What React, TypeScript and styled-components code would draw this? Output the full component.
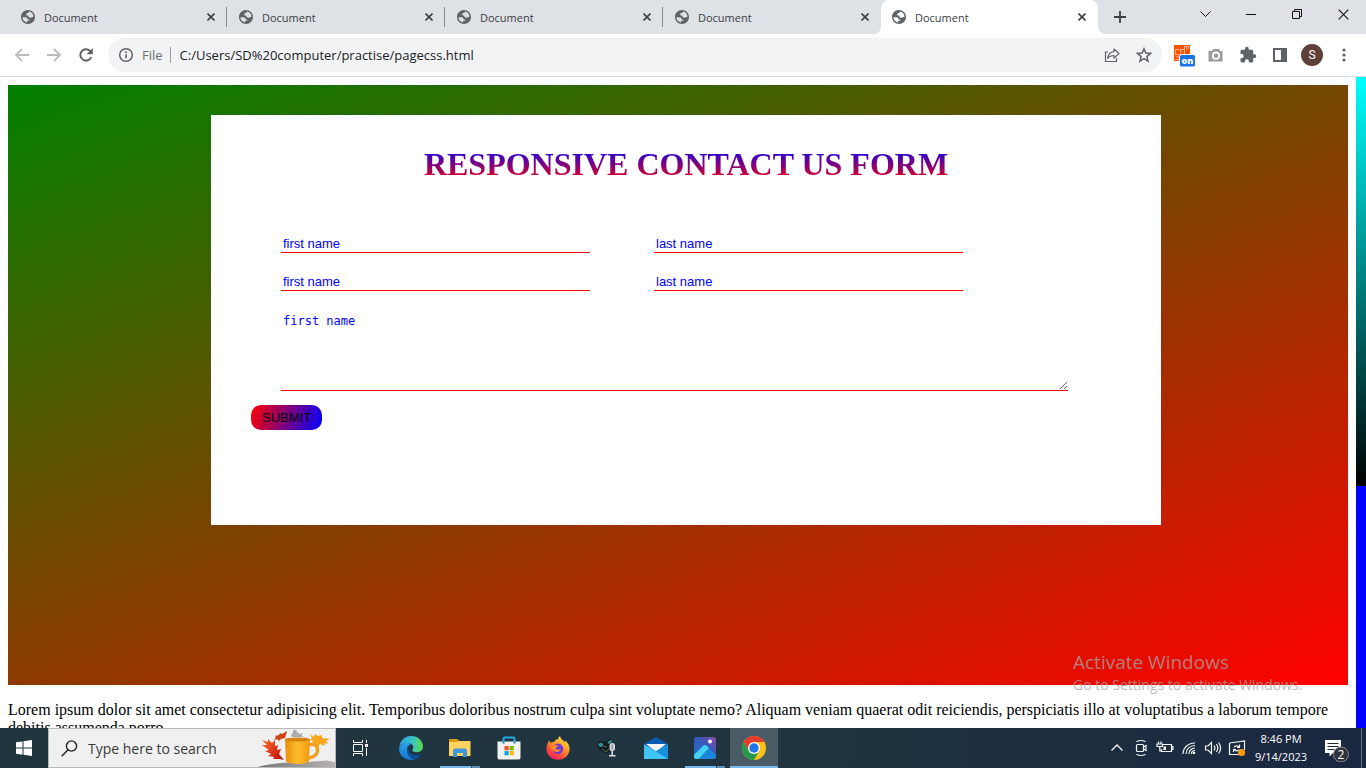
import React from "react";
import styled, { createGlobalStyle, css } from "styled-components";

const UI_FONT = `"Open Sans", "Noto Sans", sans-serif`;

const GlobalStyle = createGlobalStyle`
  * { box-sizing: border-box; }
  body { margin: 0; background: #fff; }
  button { font: inherit; color: inherit; border: 0; padding: 0; background: none; }
  svg { display: block; flex: none; }
`;

const Desktop = styled.div`
  display: grid;
  grid-template-rows: 34px 43px minmax(0, 1fr) 40px;
  height: 100vh;
  overflow: hidden;
  font-family: ${UI_FONT};
`;

/* ---------- tab strip ---------- */

const TabStrip = styled.header`
  display: flex;
  background: #dee1e6;
  padding-left: 9px;
`;

const Tab = styled.div<{ $active?: boolean; $divider?: boolean }>`
  display: flex;
  align-items: center;
  flex: 0 1 218px;
  min-width: 0;
  padding: 0 9px 0 12px;
  color: #3c4043;
  font-size: 11px;
  position: relative;
  ${(p) =>
    p.$divider &&
    css`
      background: linear-gradient(#85888c, #85888c) right center / 1px 20px no-repeat;
    `}
  ${(p) =>
    p.$active &&
    css`
      flex-basis: 217px;
      background: #fff;
      border-radius: 8px 8px 0 0;
      padding-left: 11px;
      &::before,
      &::after {
        content: "";
        position: absolute;
        bottom: 0;
        width: 8px;
        height: 8px;
      }
      &::before {
        right: 100%;
        background: radial-gradient(circle at 0 0, transparent 8px, #fff 8px);
      }
      &::after {
        left: 100%;
        background: radial-gradient(circle at 100% 0, transparent 8px, #fff 8px);
      }
    `}
`;

const TabTitle = styled.span`
  flex: 1;
  margin-left: 9px;
  white-space: nowrap;
  overflow: hidden;
`;

const IconButton = styled.button<{ $w?: number }>`
  display: flex;
  align-items: center;
  justify-content: center;
  flex: none;
  width: ${(p) => p.$w ?? 32}px;
  color: #5f6368;
`;

const CloseTab = styled(IconButton)`
  width: 14px;
  color: #3c4043;
`;

const NewTab = styled(IconButton)`
  margin-left: 8px;
  width: 28px;
  color: #3c4043;
`;

const WindowControls = styled.div`
  display: flex;
  height: 28px;
  margin-left: auto;
`;

const WindowButton = styled(IconButton)`
  width: 46px;
  color: #111;
`;

/* ---------- toolbar ---------- */

const Toolbar = styled.nav`
  display: flex;
  align-items: center;
  padding: 0 6px;
  background: #fff;
  border-bottom: 1px solid #dadce0;
`;

const AddressBar = styled.div`
  display: flex;
  align-items: center;
  flex: 1;
  min-width: 0;
  height: 34px;
  margin: 0 6px;
  padding: 0 2px 0 10px;
  border-radius: 17px;
  background: #f1f3f4;
  font-size: 13px;
`;

const Scheme = styled.span`
  margin-left: 8px;
  padding-right: 7px;
  color: #6b6f74;
  line-height: 16px;
  border-right: 1px solid #9a9da1;
`;

const AddressInput = styled.input`
  flex: 1;
  min-width: 0;
  margin-left: 9px;
  padding: 0;
  border: 0;
  outline: 0;
  background: none;
  color: #202124;
  font: 13px ${UI_FONT};
`;

const Avatar = styled.span`
  display: grid;
  place-items: center;
  width: 22px;
  height: 22px;
  border-radius: 50%;
  background: #5d4037;
  color: #fff;
  font: 12px Roboto, sans-serif;
`;

/* ---------- web page ---------- */

const Viewport = styled.div`
  display: flex;
  position: relative;
  background: #fff;
  overflow: hidden;
`;

const Page = styled.main`
  flex: 1;
  min-width: 0;
  padding: 8px;
  font: 16px/18px "Liberation Serif", serif;
  color: #000;
`;

const Hero = styled.section`
  height: 600px;
  padding: 30px 0 0 16px;
  background: linear-gradient(160deg, green, red);
`;

const Card = styled.form`
  max-width: 950px;
  height: 410px;
  margin: 0 auto;
  padding: 31px 40px 0;
  background: #fff;
`;

const Title = styled.h1`
  margin: 0 0 52px;
  font-size: 32px;
  line-height: 37px;
  text-align: center;
  color: transparent;
  background: linear-gradient(blue, red);
  background-clip: text;
  -webkit-background-clip: text;
`;

const Fields = styled.div`
  display: grid;
  grid-template-columns: repeat(2, minmax(0, 309px));
  gap: 20px 64px;
  margin: 0 53px 14px 30px;
`;

const fieldLook = css`
  border: 0;
  border-bottom: 1px solid red;
  border-radius: 0;
  outline: 0;
  background: none;
  &::placeholder {
    color: blue;
    opacity: 1;
  }
`;

const TextField = styled.input`
  ${fieldLook}
  height: 18px;
  padding: 1px 2px;
  font: 13px "Liberation Sans", sans-serif;
`;

const Message = styled.textarea`
  ${fieldLook}
  grid-column: 1 / -1;
  width: 787px;
  height: 80px;
  padding: 3px 2px;
  font: 12px/15px "DejaVu Sans Mono", monospace;
`;

const Submit = styled.button`
  height: 25px;
  padding: 0 11px;
  border-radius: 10px;
  background: linear-gradient(110deg, red, blue);
  color: #000;
  font: 13px "Liberation Sans", sans-serif;
`;

const Copy = styled.p`
  margin: 16px 0;
`;

const ScrollTrack = styled.div`
  flex: none;
  width: 10px;
  background: blue;
`;

const ScrollThumb = styled.div`
  height: 63%;
  max-height: 409px;
  background: linear-gradient(cyan, black);
`;

const Watermark = styled.div`
  position: absolute;
  right: 57px;
  bottom: 33px;
  width: 236px;
  color: rgba(165, 165, 165, 0.75);
  font-size: 14px;
  line-height: 20px;
  white-space: nowrap;
  pointer-events: none;
`;

const WatermarkTitle = styled.div`
  font-size: 19px;
  line-height: 26px;
`;

/* ---------- taskbar ---------- */

const Taskbar = styled.footer`
  display: flex;
  background: linear-gradient(90deg, #20363f, #1f3440 60%, #1a2740);
  color: #fff;
`;

const SearchBox = styled.label`
  display: flex;
  align-items: center;
  flex: 0 1 288px;
  padding-left: 12px;
  border: 1px solid #b8b8b8;
  background: #f0f0f0;
  overflow: hidden;
`;

const SearchInput = styled.input`
  flex: 1;
  min-width: 0;
  margin-left: 10px;
  padding: 0;
  border: 0;
  outline: 0;
  background: none;
  font: 14px ${UI_FONT};
  &::placeholder {
    color: #3a3a3a;
    opacity: 1;
  }
`;

const AppList = styled.div`
  display: flex;
  gap: 1px;
  margin-left: 3px;
`;

const AppButton = styled(IconButton)<{ $state?: "stacked" | "active" }>`
  width: 48px;
  ${(p) =>
    p.$state === "stacked" &&
    css`
      background: linear-gradient(90deg, #76b9ed 31px, #2f4b5c 31px, #2f4b5c 32px, #5a8fb6 32px) 4px 100% / 40px 2px
        no-repeat;
    `}
  ${(p) =>
    p.$state === "active" &&
    css`
      background: linear-gradient(#76b9ed, #76b9ed) 0 100% / 100% 2px no-repeat #4b5b65;
    `}
`;

const Tray = styled.div`
  display: flex;
  margin-left: auto;
`;

const Clock = styled.time`
  display: flex;
  flex-direction: column;
  justify-content: center;
  width: 64px;
  font-size: 11px;
  line-height: 18px;
  text-align: center;
`;

const ShowDesktop = styled.div`
  width: 5px;
  border-left: 1px solid #66717f;
`;

/* ---------- icons ---------- */

const Globe = () => (
  <svg width="14" height="14" viewBox="2 2 20 20">
    <path
      fill="#5f6368"
      d="M12 2C6.480 2 2 6.480 2 12s4.480 10 10 10 10-4.480 10-10S17.520 2 12 2zM4 12.500h4c2.300 0 3.500 1 3.500 3h2.300v1.700h-3v2.700C7 19.400 4.200 16.300 4 12.500zM19.900 11.500c-.6.500-1.500.7-2.300.4-1 1.400-3 1.600-4.200.6-.9-.8-1.300-1.700-1-2.700H9.600V8.200c0-1 .8-1.800 1.800-1.800h1.200c0-1 .5-1.700 1.300-2.100 3.300.7 5.800 3.600 6 7.200z"
    />
  </svg>
);

const Cross = ({ size = 8, w = 1.6 }: { size?: number; w?: number }) => (
  <svg width={size} height={size} viewBox="0 0 8 8">
    <path d="M.5.5l7 7M7.500.5l-7 7" stroke="currentColor" strokeWidth={w} />
  </svg>
);

const Arrow = ({ flip }: { flip?: boolean }) => (
  <svg width="16" height="16" viewBox="0 0 16 16" fill="none" stroke="#babcbe" strokeWidth="1.800">
    <path d={flip ? "M1 8h13M8 2l6 6-6 6" : "M15 8H2M8 2 2 8l6 6"} />
  </svg>
);

const Reload = () => (
  <svg width="16" height="16" viewBox="0 0 16 16">
    <path d="M13.300 10a5.700 5.700 0 1 1-.8-5.600" fill="none" stroke="#5f6368" strokeWidth="2" />
    <path d="M14.800 1v6.200H8.600z" fill="#5f6368" />
  </svg>
);

const Info = () => (
  <svg width="16" height="16" viewBox="0 0 16 16">
    <circle cx="8" cy="8" r="6.300" fill="none" stroke="#5f6368" strokeWidth="1.500" />
    <path d="M8 7.200v4M8 4.300v1.700" stroke="#5f6368" strokeWidth="1.600" />
  </svg>
);

const Share = () => (
  <svg width="16" height="16" viewBox="0 0 16 16" fill="none" stroke="#5f6368" strokeWidth="1.200">
    <path d="M4 5H1.500v9.500h11V11" />
    <path d="M10 2l5 4.500L10 11V8.500C7 8.500 5 9.500 3.700 11.500 4 7.500 6 5 10 4.500z" strokeLinejoin="round" />
  </svg>
);

const Star = () => (
  <svg width="16" height="16" viewBox="0 0 16 16" fill="none" stroke="#5f6368" strokeWidth="1.500">
    <path d="M8 1.800l1.800 4.300 4.700.4-3.600 3.100 1.100 4.600-4-2.500-4 2.500 1.100-4.600L1.500 6.500l4.700-.4z" />
  </svg>
);

const Extension = () => (
  <svg width="24" height="26" viewBox="-2 -3 24 26">
    <path fill="#ff5200" d="M0 0h16v16H0z" />
    <g fill="none" stroke="#ffb08a" strokeWidth="1">
      <path d="M5.500 4.500H1.500v5h4M10.500 2v7.500h-4v-5h4M2 12h3M1.500 14.500H5M10.500 4V1.500h4V4M12.500 1.500V4" />
    </g>
    <rect x="5.500" y="9.500" width="16" height="12.500" rx="2" fill="#1a73e8" stroke="#fff" strokeWidth="1" />
    <text x="13.500" y="19" fill="#fff" fontFamily="Open Sans, sans-serif" fontSize="9" fontWeight="800" textAnchor="middle">on</text>
  </svg>
);

const Camera = () => (
  <svg width="16" height="16" viewBox="0 0 16 16">
    <path fill="#9b9b9b" d="M5 2h6l1 2h2.500v10.500h-14V4H4z" />
    <circle cx="8" cy="8.700" r="3.200" fill="#9b9b9b" stroke="#fff" strokeWidth="1.800" />
  </svg>
);

const Puzzle = () => (
  <svg width="18" height="18" viewBox="0 0 24 24" fill="#5f6368">
    <path d="M20.500 11H19V7c0-1.100-.9-2-2-2h-4V3.500a2.500 2.500 0 0 0-5 0V5H4c-1.100 0-2 .9-2 2v3.800h1.500a2.700 2.700 0 0 1 0 5.400H2V20c0 1.100.9 2 2 2h3.800v-1.500a2.700 2.700 0 0 1 5.400 0V22H17c1.100 0 2-.9 2-2v-4h1.500a2.500 2.500 0 0 0 0-5z" />
  </svg>
);

const SidePanel = () => (
  <svg width="14" height="14" viewBox="0 0 14 14">
    <path d="M1 1h12v12H1z" fill="none" stroke="#5f6368" strokeWidth="2" />
    <path d="M8 1h5v12H8z" fill="#5f6368" />
  </svg>
);

const Dots = () => (
  <svg width="4" height="14" viewBox="0 0 4 14" fill="#5f6368">
    <circle cx="2" cy="2" r="1.600" />
    <circle cx="2" cy="7" r="1.600" />
    <circle cx="2" cy="12" r="1.600" />
  </svg>
);

const StartLogo = () => (
  <svg width="16" height="16" viewBox="0 0 16 16" fill="#fff">
    <path d="M0 2.300 6.500 1.400v6.200H0zM7.500 1.200 16 0v7.600H7.500zM0 8.500h6.500v6.200L0 13.800zM7.500 8.500H16V16l-8.500-1.200z" />
  </svg>
);

const Magnifier = () => (
  <svg width="17" height="17" viewBox="0 0 17 17" fill="none" stroke="#222" strokeWidth="1.400">
    <circle cx="10.500" cy="6" r="5.100" />
    <path d="M7 9.800.7 16.200" />
  </svg>
);

const MugArt = () => (
  <svg width="76" height="38" viewBox="0 0 76 38">
    <defs>
      <linearGradient id="mug" x1="0" x2="1">
        <stop offset="0" stopColor="#e88d0c" />
        <stop offset=".5" stopColor="#ffbd2e" />
        <stop offset="1" stopColor="#f09a12" />
      </linearGradient>
      <linearGradient id="leaf" x1="0" y1="0" x2="1" y2="1">
        <stop offset="0" stopColor="#ff6a2b" />
        <stop offset="1" stopColor="#b80d08" />
      </linearGradient>
      <linearGradient id="stone" x1="0" x2="1">
        <stop offset="0" stopColor="#777" />
        <stop offset="1" stopColor="#b5b1b1" />
      </linearGradient>
    </defs>
    <path d="M-2 38C15 34 28 33 48 33L68 31.500 76 33v5z" fill="url(#stone)" />
    <path d="M33 8c-2-4 2-3 1-7h4c-2 3 3 2 2 4l4-1c-2 2-1 3 1 4z" fill="#a9adb2" />
    <path d="M25 31l-4-1-7 0 1-2-6-1 3-2-6-3 4-1-7-5 5 0-5-5 6 2 0-3 4 4 3-3 0 6 3-1-1 5 4-1-2 5z" fill="url(#leaf)" />
    <path d="M15 11l2-3-1-1 4-1 1-2 2 1 5-3-1 4-1 3-4 1-2 2-2-2z" fill="#cf4512" />
    <path d="M50 5l5 3 1-3 3 2 4-1 0 3 8 1-4 2 2 3-4-1 1 3-5-2-2 3-2-3-4 0 1-3-3-1 2-2z" fill="#f7a51b" />
    <path d="M50 16c10-4 13 11 0 13" fill="none" stroke="#f2a01c" strokeWidth="3.500" />
    <path d="M26 10h25l-1 22c0 4-22 4-23 0z" fill="url(#mug)" />
    <ellipse cx="38.500" cy="10.500" rx="12.500" ry="2" fill="#d9820c" />
  </svg>
);

const TaskView = () => (
  <svg width="17" height="16" viewBox="0 0 17 16" fill="none" stroke="#fff">
    <path d="M1.500 0v2.500h9V0M1.500 4.500h9v7h-9zM1.500 16v-2.500h9V16M14.500 0v3M14.500 8v8" />
    <path d="M13 4h3v3h-3z" fill="#fff" stroke="none" />
  </svg>
);

const Edge = () => (
  <svg width="24" height="24" viewBox="0 0 24 24">
    <defs>
      <linearGradient id="edgeTop" x1="0" x2="1">
        <stop offset="0" stopColor="#2a9de2" />
        <stop offset=".5" stopColor="#35c1cf" />
        <stop offset="1" stopColor="#62d84c" />
      </linearGradient>
      <linearGradient id="edgeBody" x1="0" y1="0" x2="0" y2="1">
        <stop offset="0" stopColor="#2da3e8" />
        <stop offset="1" stopColor="#1473d0" />
      </linearGradient>
    </defs>
    <path d="M.3 11C1 4.500 6 0 12 0c7 0 12 5 12 10.500 0 3.500-2.700 5.700-6 5.700-3 0-4.700-1-4.700-2 0-.6 1-1.200 1-3C14.300 9 12 7 8.500 7 5 7 2 8.500.3 11z" fill="url(#edgeTop)" />
    <path d="M0 12.500C1 9 4.500 7 8.500 7c1.500 0 3 .4 3.900 1C9 9 8 11.500 8 14c0 4.600 3.500 8.500 8 9.300-1.200.5-2.600.7-4 .7C5 24 0 19 0 12.500z" fill="url(#edgeBody)" />
    <path d="M12.400 8C9 9 8 11.500 8 14c0 4.600 3.500 8.500 8 9.300 2.800-.8 5-2.700 6.400-5.200-1.400.8-3 1.100-4.600 1.100-5 0-8.300-3-8.300-6.200C9.500 10.500 11 9 12.400 8z" fill="#0b4f96" />
  </svg>
);

const Explorer = () => (
  <svg width="22" height="20" viewBox="0 0 22 20">
    <path d="M0 2h9l1 1h11.500v15H0z" fill="#ffd45e" />
    <path d="M0 1h8l1.500 1.500L8.500 4H0z" fill="#dd9b10" />
    <path d="M4 19v-7l1.500-1.500h11L18 12v7h-4v-4H8v4z" fill="#3d97dc" />
  </svg>
);

const Store = () => (
  <svg width="24" height="24" viewBox="0 0 24 24">
    <path d="M6.500 8V2.500c0-.6.400-1 1-1h9c.6 0 1 .4 1 1V8" fill="none" stroke="#27a9e6" strokeWidth="2" />
    <path d="M.5 5.500h23v16c0 1.400-1 2-2 2h-19c-1 0-2-.6-2-2z" fill="#f1f1f1" />
    <path d="M7.500 10h4.200v4.200H7.500z" fill="#f25022" />
    <path d="M12.600 10h4.200v4.200h-4.200z" fill="#7fba00" />
    <path d="M7.500 15.100h4.200v4.200H7.500z" fill="#00a4ef" />
    <path d="M12.600 15.100h4.200v4.200h-4.200z" fill="#ffb900" />
    <path d="M6.500 5.500v2M17.500 5.500v2" stroke="#1479b8" strokeWidth="2" />
  </svg>
);

const Firefox = () => (
  <svg width="24" height="24" viewBox="0 0 24 24">
    <defs>
      <linearGradient id="fox" x1=".8" y1="0" x2=".2" y2="1">
        <stop offset="0" stopColor="#fff04a" />
        <stop offset=".4" stopColor="#ff9a26" />
        <stop offset=".75" stopColor="#ff4242" />
        <stop offset="1" stopColor="#ee1b6b" />
      </linearGradient>
    </defs>
    <path d="M3 4c.3 1.300.8 2 1.500 2.600C5.500 6 6.500 5.700 8 6c1-1.700 2-2.400 4-3 .3-1.200 1-2.200 2-3 .5 3 3 4 5 6.500.3-.6.200-1.200 0-2C22 6.500 23.500 9.500 23.500 13c0 6-5 10.800-11.500 10.800S.5 19 .5 13C.5 9 2 7 3 4z" fill="url(#fox)" />
    <circle cx="12" cy="12.800" r="5.200" fill="#7139d8" />
    <path d="M4 9.500c2-1.500 4-1.200 5.500-.2l2.800.2c-.3 1.500-2.300 1.700-2.600 2.600.3 1.500 2.500 2.300 5 1-1 3.700-6.500 3.800-8.200.5z" fill="#ff8a24" />
  </svg>
);

const VoiceApp = () => (
  <svg width="20" height="18" viewBox="0 0 20 18">
    <path d="M0 5l3-3 5 1 5-3 3 3-1 7-4 4-5-1-5-4z" fill="#101c1e" />
    <path d="M1 5l3-1.500 2.500 1.500-1.500 3-3-.5zM10 3l4-2 1.500 2-4 2z" fill="#2d8f96" />
    <path d="M5 10l4 3 3-3M6 7l4 1" fill="none" stroke="#5b6b58" />
    <rect x="12.500" y="4" width="5.500" height="8" rx="2.500" fill="#d3d6d6" />
    <path d="M15.200 12v4M12 16.700h6.500" fill="none" stroke="#e0e2e2" strokeWidth="1.500" />
    <path d="M15.200 5.500v5" stroke="#6e7575" />
  </svg>
);

const Mail = () => (
  <svg width="24" height="22" viewBox="0 0 24 22">
    <path d="M0 7 12 0l12 7v5H0z" fill="#0a5cb0" />
    <path d="M2 7h20L12 15z" fill="#f3f3f3" />
    <path d="M0 7.500 12 14 24 7.500V22H0z" fill="#29a9ea" />
    <path d="M0 7.500 24 22H0z" fill="#42c4f5" />
    <path d="M24 7.500 12 14.200 24 22z" fill="#1a8fdc" />
  </svg>
);

const Photos = () => (
  <svg width="22" height="22" viewBox="0 0 22 22">
    <defs>
      <linearGradient id="sky" x1="0" y1="1" x2="1" y2="0">
        <stop offset="0" stopColor="#1b73d1" />
        <stop offset=".6" stopColor="#3a57b8" />
        <stop offset="1" stopColor="#8d4da8" />
      </linearGradient>
      <clipPath id="frame">
        <rect width="22" height="22" rx="2.500" />
      </clipPath>
    </defs>
    <g clipPath="url(#frame)">
      <path d="M0 0h22v22H0z" fill="url(#sky)" />
      <path d="M0 18 9 9c1.200-1.200 2.800-1.200 4 0l9 9v4H0z" fill="#1d86d8" />
      <path d="M0 18 9 9c1.200-1.200 2.800-1.200 4 0l2 2L4.500 22H0z" fill="#43d0f5" />
      <circle cx="16" cy="4.500" r="2" fill="#fff" />
    </g>
  </svg>
);

const Chrome = () => (
  <svg width="24" height="24" viewBox="0 0 24 24">
    <circle cx="12" cy="12" r="12" fill="#fbc116" />
    <path d="M1.600 6A12 12 0 0 1 22.400 6H12L6.800 15z" fill="#e33b2e" />
    <path d="M1.600 6A12 12 0 0 0 12 24l5.200-9-10.400 0z" fill="#229a4b" />
    <circle cx="12" cy="12" r="6" fill="#fff" />
    <circle cx="12" cy="12" r="4.700" fill="#1f74e8" />
  </svg>
);

const TrayIcon = ({ children }: { children: React.ReactNode }) => (
  <svg width="18" height="18" viewBox="0 0 18 18" fill="none" stroke="#f2f4f5" strokeWidth="1.200">
    {children}
  </svg>
);

const apps: { name: string; icon: React.ReactNode; state?: "stacked" | "active" }[] = [
  { name: "Microsoft Edge", icon: <Edge /> },
  { name: "File Explorer", icon: <Explorer />, state: "stacked" },
  { name: "Microsoft Store", icon: <Store /> },
  { name: "Firefox", icon: <Firefox /> },
  { name: "Voice", icon: <VoiceApp /> },
  { name: "Mail", icon: <Mail /> },
  { name: "Photos", icon: <Photos />, state: "stacked" },
  { name: "Google Chrome", icon: <Chrome />, state: "active" },
];

/* ---------- sections ---------- */

const TabsRow = () => (
  <TabStrip>
    {[0, 1, 2, 3, 4].map((i) => (
      <Tab key={i} $active={i === 4} $divider={i < 3}>
        <Globe />
        <TabTitle>Document</TabTitle>
        <CloseTab aria-label="Close tab">
          <Cross />
        </CloseTab>
      </Tab>
    ))}
    <NewTab aria-label="New tab">
      <svg width="12" height="12" viewBox="0 0 12 12">
        <path d="M6 0v12M0 6h12" stroke="currentColor" strokeWidth="1.800" />
      </svg>
    </NewTab>
    <WindowControls>
      <WindowButton aria-label="Search tabs">
        <svg width="11" height="7" viewBox="0 0 11 7" fill="none" stroke="currentColor">
          <path d="M.5.5l5 5 5-5" />
        </svg>
      </WindowButton>
      <WindowButton aria-label="Minimize">
        <svg width="10" height="2" viewBox="0 0 10 2">
          <path d="M0 1h10" stroke="currentColor" shapeRendering="crispEdges" />
        </svg>
      </WindowButton>
      <WindowButton aria-label="Restore">
        <svg width="10" height="10" viewBox="0 0 10 10" fill="none" stroke="currentColor">
          <path d="M.5 2.500h7v7h-7zM2.500 2.500v-2h7v7h-2" />
        </svg>
      </WindowButton>
      <WindowButton aria-label="Close">
        <Cross size={11} w={0.8} />
      </WindowButton>
    </WindowControls>
  </TabStrip>
);

const BrowserBar = () => (
  <Toolbar>
    <IconButton aria-label="Back"><Arrow /></IconButton>
    <IconButton aria-label="Forward"><Arrow flip /></IconButton>
    <IconButton aria-label="Reload"><Reload /></IconButton>
    <AddressBar>
      <Info />
      <Scheme>File</Scheme>
      <AddressInput aria-label="Address" defaultValue="C:/Users/SD%20computer/practise/pagecss.html" />
      <IconButton aria-label="Share"><Share /></IconButton>
      <IconButton aria-label="Bookmark"><Star /></IconButton>
    </AddressBar>
    <IconButton aria-label="Extension"><Extension /></IconButton>
    <IconButton aria-label="Screenshot"><Camera /></IconButton>
    <IconButton aria-label="Extensions"><Puzzle /></IconButton>
    <IconButton aria-label="Side panel"><SidePanel /></IconButton>
    <IconButton aria-label="Profile"><Avatar>S</Avatar></IconButton>
    <IconButton aria-label="Menu"><Dots /></IconButton>
  </Toolbar>
);

const ContactForm = () => (
  <Card onSubmit={(e) => e.preventDefault()}>
    <Title>RESPONSIVE CONTACT US FORM</Title>
    <Fields>
      <TextField aria-label="first name" placeholder="first name" />
      <TextField aria-label="last name" placeholder="last name" />
      <TextField aria-label="first name, second row" placeholder="first name" />
      <TextField aria-label="last name, second row" placeholder="last name" />
      <Message aria-label="message" placeholder="first name" />
    </Fields>
    <Submit type="submit">SUBMIT</Submit>
  </Card>
);

const WindowsTaskbar = () => (
  <Taskbar>
    <IconButton $w={48} aria-label="Start"><StartLogo /></IconButton>
    <SearchBox>
      <Magnifier />
      <SearchInput aria-label="Search" placeholder="Type here to search" />
      <MugArt />
    </SearchBox>
    <IconButton $w={48} aria-label="Task view"><TaskView /></IconButton>
    <AppList>
      {apps.map((a) => (
        <AppButton key={a.name} aria-label={a.name} $state={a.state}>
          {a.icon}
        </AppButton>
      ))}
    </AppList>
    <Tray>
      <IconButton $w={24} aria-label="Hidden icons">
        <TrayIcon><path d="M3.500 11.500 9 6l5.500 5.500" strokeWidth="1.400" /></TrayIcon>
      </IconButton>
      <IconButton $w={24} aria-label="Meet now">
        <TrayIcon>
          <rect x="4.500" y="5.500" width="7" height="7" rx="1" />
          <path d="M11.500 8 14 6.500v5L11.500 10M4.500 2.800q4.500-2.600 9 0M4.500 15.200q4.500 2.600 9 0" />
        </TrayIcon>
      </IconButton>
      <IconButton $w={24} aria-label="Battery">
        <TrayIcon>
          <path d="M6.500 5.500h9v7h-10V10M15.500 7.500h1.500v3h-1.500M2.500 2.500v2.500M5 2.500v2.500M1 5h5.500v2.500H1zM3.800 7.500v4.500h2" />
          <path d="M7.500 7.500H10v3.500H7.500z" fill="#fff" stroke="none" />
        </TrayIcon>
      </IconButton>
      <IconButton $w={24} aria-label="Network">
        <TrayIcon>
          <path d="M3 15C3 9 8 4 15 4M6 15c0-5 4-8.500 9-8.500M8.800 15c0-3.500 3-6 6.200-6M11.500 15c0-2 1.500-3.500 3.500-3.500" />
          <circle cx="14" cy="14" r="1.300" fill="#fff" stroke="none" />
        </TrayIcon>
      </IconButton>
      <IconButton $w={24} aria-label="Volume">
        <TrayIcon>
          <path d="M1.500 7H4l3.500-3.500v11L4 11H1.500zM10 6.500q1.800 2.500 0 5M12.300 5q3 4 0 8M14.600 3.500q4 5.500 0 11" />
        </TrayIcon>
      </IconButton>
      <IconButton $w={24} aria-label="Windows Update">
        <TrayIcon>
          <path d="M1.500 4 16.500 2v9M1.500 4v11.500H11" />
          <path d="M6 8.500c1-2.200 4-2.200 5.200-.3M11.500 5.500v3H9M11 10.500c-1 1.800-3.800 1.800-5 0M5.500 13v-2.500H8" />
          <circle cx="13.500" cy="13.500" r="3.600" fill="#ff9a0c" stroke="none" />
        </TrayIcon>
      </IconButton>
      <Clock>
        <span>8:46 PM</span>
        <span>9/14/2023</span>
      </Clock>
      <IconButton $w={48} aria-label="Notifications">
        <svg width="28" height="28" viewBox="0 0 28 28">
          <path d="M2 6h16v13h-8l-3.500 3.500V19H2z" fill="#fff" />
          <path d="M4.500 9.500h11M4.500 12.500h11M4.500 15.500h7" stroke="#1c2a3c" />
          <circle cx="18" cy="20.500" r="7.500" fill="#2d3238" stroke="#8a9097" />
          <text x="18" y="25" fill="#fff" fontFamily="Open Sans, sans-serif" fontSize="12" textAnchor="middle">2</text>
        </svg>
      </IconButton>
      <ShowDesktop />
    </Tray>
  </Taskbar>
);

export default function App() {
  return (
    <Desktop>
      <GlobalStyle />
      <TabsRow />
      <BrowserBar />
      <Viewport>
        <Page>
          <Hero>
            <ContactForm />
          </Hero>
          <Copy>
            Lorem ipsum dolor sit amet consectetur adipisicing elit. Temporibus doloribus nostrum culpa sint voluptate
            nemo? Aliquam veniam quaerat odit reiciendis, perspiciatis illo at voluptatibus a laborum tempore debitis
            assumenda porro.
          </Copy>
        </Page>
        <ScrollTrack>
          <ScrollThumb />
        </ScrollTrack>
        <Watermark>
          <WatermarkTitle>Activate Windows</WatermarkTitle>
          Go to Settings to activate Windows.
        </Watermark>
      </Viewport>
      <WindowsTaskbar />
    </Desktop>
  );
}
